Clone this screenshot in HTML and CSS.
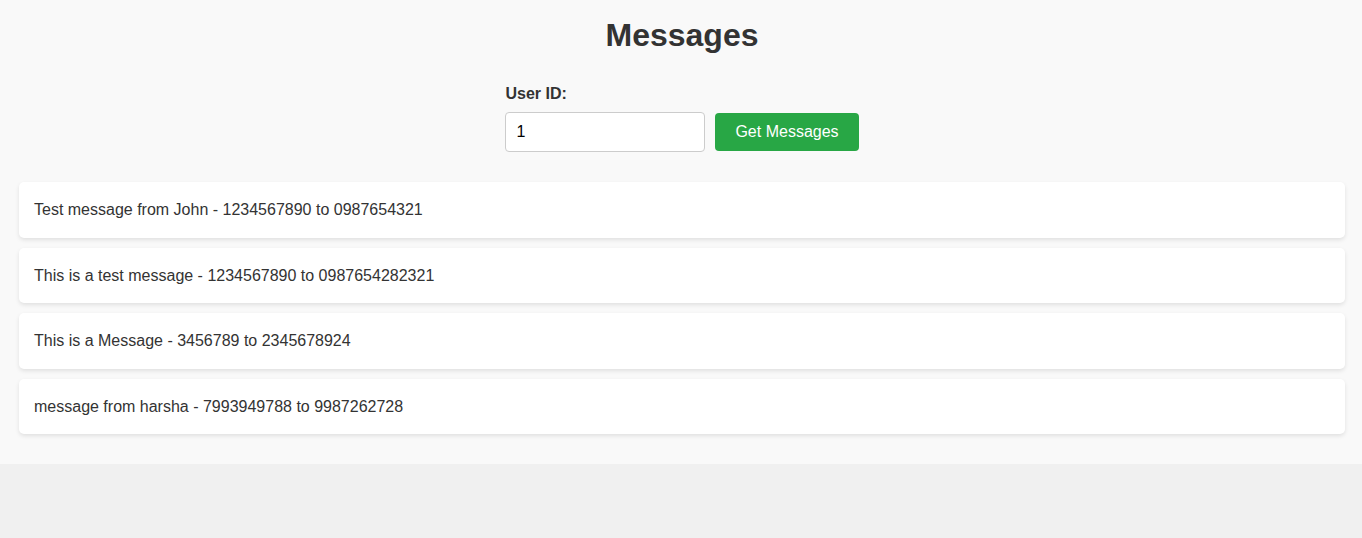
FILE: index.html
```html
<!DOCTYPE html>
<html lang="en">
<head>
<meta charset="utf-8">
<title>Messages</title>
<link rel="stylesheet" href="styles.css">
</head>
<body>
<div class="page">
  <h1 class="title">Messages</h1>
  <div class="form">
    <div class="field">
      <label class="label" for="uid">User ID:</label>
      <div class="row">
        <input class="input" id="uid" type="text" value="1">
        <button class="btn" type="button">Get Messages</button>
      </div>
    </div>
  </div>
  <div class="list">
    <div class="card">Test message from John - 1234567890 to 0987654321</div>
    <div class="card">This is a test message - 1234567890 to 0987654282321</div>
    <div class="card">This is a Message - 3456789 to 2345678924</div>
    <div class="card">message from harsha - 7993949788 to 9987262728</div>
  </div>
</div>
</body>
</html>
```
FILE: styles.css
```css
html, body {
  margin: 0;
  padding: 0;
}
body {
  background: #f0f0f0;
  font-family: "Liberation Sans", Arial, sans-serif;
  color: #333;
}
.page {
  background: #f9f9f9;
  padding: 17px 17px 20px 19px;
}
.title {
  margin: 0 0 31px;
  text-align: center;
  font-size: 32px;
  font-weight: bold;
  color: #333;
  line-height: normal;
}
.form {
  display: flex;
  justify-content: center;
  margin-bottom: 30px;
}
.label {
  display: block;
  font-weight: bold;
  font-size: 16px;
  margin-bottom: 9px;
  color: #333;
}
.row {
  display: flex;
  align-items: center;
  gap: 10px;
}
.input {
  box-sizing: border-box;
  width: 200px;
  height: 40px;
  padding: 10px;
  border: 1px solid #ccc;
  border-radius: 4px;
  font-family: "Liberation Sans", Arial, sans-serif;
  font-size: 16px;
  color: #000;
  background: #fff;
  outline: none;
}
.btn {
  box-sizing: border-box;
  height: 38px;
  padding: 0 20px;
  border: none;
  border-radius: 4px;
  background: #28a745;
  color: #fff;
  font-family: "Liberation Sans", Arial, sans-serif;
  font-size: 16px;
  cursor: pointer;
}
.card {
  background: #fff;
  padding: 15px;
  line-height: 1.6;
  font-size: 16px;
  color: #333;
  border-radius: 5px;
  box-shadow: 0 2px 4px rgba(0, 0, 0, 0.1);
  margin-bottom: 10px;
}
```
